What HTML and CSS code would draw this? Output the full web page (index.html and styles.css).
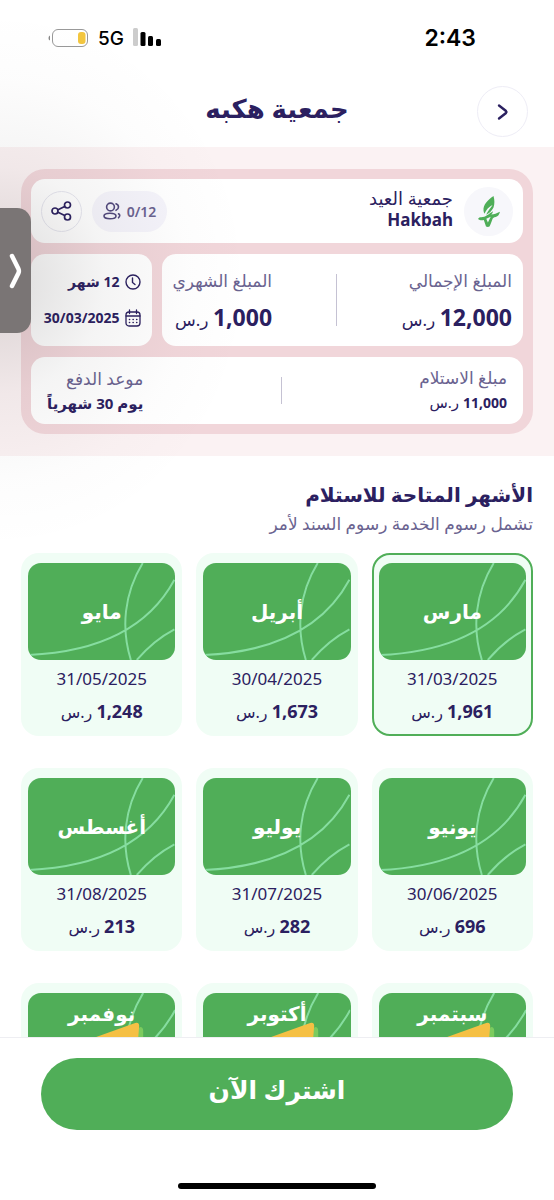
FILE: index.html
```html
<!DOCTYPE html>
<html lang="ar" dir="rtl">
<head>
    <meta charset="utf-8">
    <meta name="viewport" content="width=device-width, initial-scale=1">
    <title>جمعية هكبه</title>
    <link rel="stylesheet" href="styles.css">
</head>
<body>
    <svg class="defs" aria-hidden="true">
        <symbol id="pattern" viewBox="0 0 147 98">
            <path d="M115 0C96 31 93 66 103 98M147 17C119 69 66 90 0 93M147 67Q126 78 109 98" fill="none" stroke="#86dda0" stroke-width="2"/>
        </symbol>
        <symbol id="ribbon" viewBox="0 0 147 98">
            <path d="M112 34q3 0 3 4v20H80z" fill="#7ccb5e"/>
            <path d="M68 44l39-14q4-1 4 3l-2 25H30z" fill="#f5c044"/>
        </symbol>
    </svg>

    <div class="app">
        <div class="status-bar">
            <span class="time">2:43</span>
            <div class="status-icons">
                <svg width="41" height="20" viewBox="0 0 41 20">
                    <path d="M2 7.500v5Q.5 12 .5 10T2 7.500z" fill="#888"/>
                    <rect x="4.500" y="1.500" width="35" height="17" rx="5.500" fill="#fff" stroke="#999"/>
                    <rect x="30" y="4" width="7.500" height="12" rx="3" fill="#f3c63f"/>
                </svg>
                <span class="network">5G</span>
                <svg width="30" height="20" viewBox="0 0 30 20">
                    <rect x="0" y="0" width="5" height="18" rx="1.500" fill="#ccc"/>
                    <rect x="7.500" y="4" width="5" height="14" rx="1.500"/>
                    <rect x="15" y="8" width="5" height="10" rx="1.500"/>
                    <rect x="23" y="11" width="5" height="7" rx="1.500"/>
                </svg>
            </div>
        </div>

        <header class="header">
            <button class="back" aria-label="رجوع">
                <svg width="12" height="18" viewBox="0 0 12 18"><path d="M2 2.500L9 8Q10 9 9 10L2 15.500" fill="none" stroke="currentColor" stroke-width="2.400" stroke-linecap="round"/></svg>
            </button>
            <h1>جمعية هكبه</h1>
        </header>

        <main>
            <section class="summary">
                <div class="summary-card">
                    <div class="panel group">
                        <div class="logo">
                            <svg width="22" height="31" viewBox="0 0 22 31" fill="#4fae58">
                                <path d="M15.500 0C9.500 4 5 9 5.500 14.500c.1 1.500.6 2.500 1.200 3.200C8.500 13 11 11 14.500 9c-1.500 3-4 4.500-6.300 9.700 2.800-1 5.800-4 7.300-7.200 1.200-3.500 1.200-7.500 0-11.500z"/>
                                <path d="M0 23c.8-1.200 1.500-1.800 2.500-1.800 5 .3 8.500-3.700 12.500-6-.2 1.600-1 2.500-1.800 3.400 2.800-.2 5.600-1.300 8.800-2.800-.6 2.600-2 4.700-4.300 5.300-1.800.4-2.700.7-3.200 2-.8 2.200-1.600 4.800-3 7.400-1 .6-2.300.6-3.500 0L5.800 24C4 24.600 1.500 24.300 0 23zM8.300 22.800l1.600 3.700 2.800-5.700z" fill-rule="evenodd"/>
                            </svg>
                        </div>
                        <div class="group-name">
                            <span>جمعية العيد</span>
                            <strong>Hakbah</strong>
                        </div>
                        <div class="members">
                            <span>0/12</span>
                            <svg width="18" height="18" viewBox="0 0 18 18" fill="none" stroke="#51487c" stroke-width="1.600" stroke-linecap="round">
                                <circle cx="7.500" cy="5" r="3.900"/>
                                <ellipse cx="7" cy="14" rx="6" ry="2.800"/>
                                <path d="M13 1.800q2.500 1 2.500 3.200T13 8.300M15.500 11.800q2.500 1.500 0 4"/>
                            </svg>
                        </div>
                        <button class="share" aria-label="مشاركة">
                            <svg width="21" height="20" viewBox="0 0 21 20" fill="none" stroke="currentColor" stroke-width="1.700">
                                <circle cx="4" cy="10" r="3"/><circle cx="16.500" cy="4" r="3"/><circle cx="16.500" cy="16" r="3"/>
                                <path d="M7 8.800l6.700-3.400M7 11.300l6.700 3.300"/>
                            </svg>
                        </button>
                    </div>

                    <div class="row">
                        <div class="panel amounts">
                            <div class="amount">
                                <span class="label">المبلغ الإجمالي</span>
                                <span class="price"><b>12,000</b> ر.س</span>
                            </div>
                            <span class="divider"></span>
                            <div class="amount">
                                <span class="label">المبلغ الشهري</span>
                                <span class="price"><b>1,000</b> ر.س</span>
                            </div>
                        </div>
                        <div class="panel period">
                            <div class="period-line">
                                <svg width="16" height="16" viewBox="0 0 16 16" fill="none" stroke="currentColor" stroke-width="1.400" stroke-linecap="round"><circle cx="8" cy="8" r="7"/><path d="M7.500 4v4.500l2.500 2"/></svg>
                                <span>12 شهر</span>
                            </div>
                            <div class="period-line">
                                <svg width="16" height="18" viewBox="0 0 16 18" fill="none" stroke="currentColor" stroke-width="1.300" stroke-linecap="round"><rect x="1" y="3" width="14" height="14" rx="3"/><path d="M1 7h14M4.500 1v3.500M11.500 1v3.500"/><path d="M4.500 10.500h7.500M4.500 13.500h7.500" stroke-width="1.600" stroke-dasharray=".1 3.500"/></svg>
                                <span>30/03/2025</span>
                            </div>
                        </div>
                    </div>

                    <div class="panel payout">
                        <div class="payout-item">
                            <span class="label">مبلغ الاستلام</span>
                            <span class="value"><b>11,000</b> ر.س</span>
                        </div>
                        <span class="divider"></span>
                        <div class="payout-item">
                            <span class="label">موعد الدفع</span>
                            <strong class="value">يوم 30 شهرياً</strong>
                        </div>
                    </div>
                </div>
            </section>

            <section class="months">
                <h2>الأشهر المتاحة للاستلام</h2>
                <p>تشمل رسوم الخدمة رسوم السند لأمر</p>
                <div class="month-grid">
                    <button class="month selected">
                        <span class="tile"><svg><use href="#pattern"/></svg><span>مارس</span></span>
                        <span class="date">31/03/2025</span>
                        <span class="cost"><b>1,961</b> ر.س</span>
                    </button>
                    <button class="month">
                        <span class="tile"><svg><use href="#pattern"/></svg><span>أبريل</span></span>
                        <span class="date">30/04/2025</span>
                        <span class="cost"><b>1,673</b> ر.س</span>
                    </button>
                    <button class="month">
                        <span class="tile"><svg><use href="#pattern"/></svg><span>مايو</span></span>
                        <span class="date">31/05/2025</span>
                        <span class="cost"><b>1,248</b> ر.س</span>
                    </button>
                    <button class="month">
                        <span class="tile"><svg><use href="#pattern"/></svg><span>يونيو</span></span>
                        <span class="date">30/06/2025</span>
                        <span class="cost"><b>696</b> ر.س</span>
                    </button>
                    <button class="month">
                        <span class="tile"><svg><use href="#pattern"/></svg><span>يوليو</span></span>
                        <span class="date">31/07/2025</span>
                        <span class="cost"><b>282</b> ر.س</span>
                    </button>
                    <button class="month">
                        <span class="tile"><svg><use href="#pattern"/></svg><span>أغسطس</span></span>
                        <span class="date">31/08/2025</span>
                        <span class="cost"><b>213</b> ر.س</span>
                    </button>
                    <button class="month">
                        <span class="tile offer"><svg><use href="#pattern"/><use href="#ribbon"/></svg><span>سبتمبر</span></span>
                    </button>
                    <button class="month">
                        <span class="tile offer"><svg><use href="#pattern"/><use href="#ribbon"/></svg><span>أكتوبر</span></span>
                    </button>
                    <button class="month">
                        <span class="tile offer"><svg><use href="#pattern"/><use href="#ribbon"/></svg><span>نوفمبر</span></span>
                    </button>
                </div>
            </section>
        </main>

        <footer class="footer">
            <button class="subscribe">اشترك الآن</button>
            <div class="home-indicator"></div>
        </footer>

        <div class="shade"></div>
        <button class="side-tab" aria-label="فتح">
            <svg width="14" height="36" viewBox="0 0 14 36"><path d="M3 3l6.500 13q.8 2 0 4L3 33" fill="none" stroke="#fff" stroke-width="4.500" stroke-linecap="round" stroke-linejoin="round"/></svg>
        </button>
    </div>
</body>
</html>
```
FILE: styles.css
```css
* {
    box-sizing: border-box;
}
body {
    margin: 0;
    font-family: "Noto Sans", "DejaVu Sans", sans-serif;
    color: #2b2060;
    background: #fff;
}
h1, h2, p {
    margin: 0;
}
button {
    font: inherit;
    color: inherit;
    border: none;
    padding: 0;
    background: none;
    cursor: pointer;
}
svg {
    display: block;
}
.defs {
    position: absolute;
    width: 0;
    height: 0;
}
.app {
    position: relative;
    display: flex;
    flex-direction: column;
    height: 100vh;
    overflow: hidden;
}

/* top bar */
.status-bar {
    display: flex;
    justify-content: space-between;
    align-items: center;
    height: 76px;
    padding: 0 78px 0 48px;
    font-family: Inter, sans-serif;
    color: #000;
}
.time {
    font-size: 23px;
    font-weight: 600;
}
.status-icons {
    display: flex;
    direction: ltr;
    align-items: center;
    gap: 9px;
}
.network {
    font-size: 19px;
    font-weight: 500;
}
.header {
    display: grid;
    grid-template-columns: 51px 1fr 51px;
    align-items: center;
    height: 71px;
    padding: 0 26px;
}
.header h1 {
    font-size: 26px;
    line-height: 36px;
    padding-bottom: 8px;
    text-align: center;
}
.back {
    display: grid;
    place-items: center;
    width: 51px;
    height: 51px;
    border: 1px solid #eeedf6;
    border-radius: 50%;
}

/* summary */
main {
    flex: 1;
    min-height: 0;
    overflow: hidden;
}
.summary {
    padding: 22px 21px;
    background: #fbf2f3;
}
.summary-card {
    display: flex;
    flex-direction: column;
    gap: 11px;
    padding: 10px;
    border-radius: 24px;
    background: #f1d6da;
}
.panel {
    display: flex;
    align-items: center;
    justify-content: space-between;
    border-radius: 14px;
    background: #fff;
}
.group {
    height: 64px;
    padding: 0 10px;
}
.logo {
    display: grid;
    place-items: center;
    width: 49px;
    height: 49px;
    border-radius: 50%;
    background: #f7f7fb;
}
.group-name {
    display: flex;
    flex-direction: column;
    margin-right: 11px;
    margin-left: auto;
    padding-bottom: 4px;
    font-size: 18px;
    line-height: 21px;
}
.group-name strong {
    direction: ltr;
    align-self: flex-start;
    font-size: 17px;
}
.members {
    display: flex;
    align-items: center;
    justify-content: center;
    gap: 6px;
    width: 75px;
    height: 41px;
    margin-left: 10px;
    border-radius: 21px;
    background: #f5f4fb;
    color: #6a6390;
    font-size: 14px;
    font-weight: 600;
}
.share {
    display: grid;
    place-items: center;
    width: 41px;
    height: 41px;
    border: 1px solid #e6e6ef;
    border-radius: 50%;
}
.row {
    display: grid;
    grid-template-columns: 3fr 1fr;
    gap: 10px;
}
.amounts {
    height: 92px;
    padding: 6px 11px 0;
}
.amount .label,
.amount .price {
    display: block;
}
.amount .label {
    margin-bottom: 6px;
}
.label {
    color: #6a6390;
    font-size: 17px;
    line-height: 24px;
}
.price {
    font-size: 17px;
    line-height: 36px;
}
.price b {
    font-size: 23px;
}
.divider {
    width: 1px;
    background: #c5c2d3;
}
.amounts .divider {
    height: 52px;
    margin-bottom: 6px;
}
.panel.period {
    flex-direction: column;
    align-items: flex-start;
    justify-content: center;
    gap: 12px;
    padding: 0 11px;
    font-size: 14px;
    line-height: 24px;
    font-weight: 700;
}
.period-line {
    display: flex;
    align-items: center;
    gap: 5px;
}
.payout {
    height: 67px;
    padding: 0 16px;
}
.payout-item {
    display: flex;
    flex-direction: column;
}
.payout .divider {
    height: 27px;
}
.value {
    font-size: 15px;
    line-height: 24px;
}
.value b {
    font-size: 14px;
}

/* months */
.months {
    padding: 24px 21px 0;
}
.months h2 {
    font-size: 20px;
    line-height: 30px;
}
.months p {
    padding-bottom: 15px;
    color: #6a6390;
    font-size: 17px;
    line-height: 28px;
}
.month-grid {
    display: grid;
    grid-template-columns: repeat(3, 1fr);
    gap: 32px 14px;
}
.month {
    display: flex;
    flex-direction: column;
    align-items: stretch;
    height: 183px;
    padding: 8px 5px;
    border: 2px solid transparent;
    border-radius: 18px;
    background: #f0fdf5;
    text-align: center;
}
.month.selected {
    border-color: #50ae58;
}
.tile {
    position: relative;
    display: grid;
    place-items: center;
    height: 98px;
    border-radius: 13px;
    overflow: hidden;
    background: #50ae58;
    color: #fff;
    font-size: 20px;
    line-height: 30px;
    font-weight: 700;
}
.tile svg {
    position: absolute;
    inset: 0;
    width: 100%;
    height: 100%;
}
.tile > span {
    position: relative;
}
.tile.offer {
    place-items: start center;
    padding-top: 6px;
}
.date {
    font-size: 17px;
    line-height: 38px;
}
.cost {
    font-size: 16px;
    line-height: 27px;
}
.cost b {
    font-size: 18px;
}

/* bottom bar */
.footer {
    height: 163px;
    padding: 20px 41px 0;
    border-top: 1px solid #eeeef2;
    background: #fff;
}
.subscribe {
    display: block;
    width: 100%;
    height: 72px;
    padding-bottom: 10px;
    border-radius: 36px;
    background: #50ae58;
    color: #fff;
    font-size: 25px;
    font-weight: 700;
}
.home-indicator {
    width: 198px;
    height: 6px;
    margin: 53px auto 0;
    border-radius: 3px;
    background: #000;
}

/* drawer handle over the page */
.shade {
    position: absolute;
    top: 0;
    left: 0;
    width: 280px;
    height: 560px;
    background: radial-gradient(ellipse 250px 270px at 0 50%, rgba(50, 45, 45, .17), rgba(50, 45, 45, .05) 42%, rgba(50, 45, 45, .01) 75%, transparent);
    pointer-events: none;
}
.side-tab {
    position: absolute;
    top: 208px;
    left: 0;
    display: grid;
    place-items: center;
    width: 31px;
    height: 125px;
    border-radius: 0 14px 14px 0;
    background: #7a7575;
}
```
